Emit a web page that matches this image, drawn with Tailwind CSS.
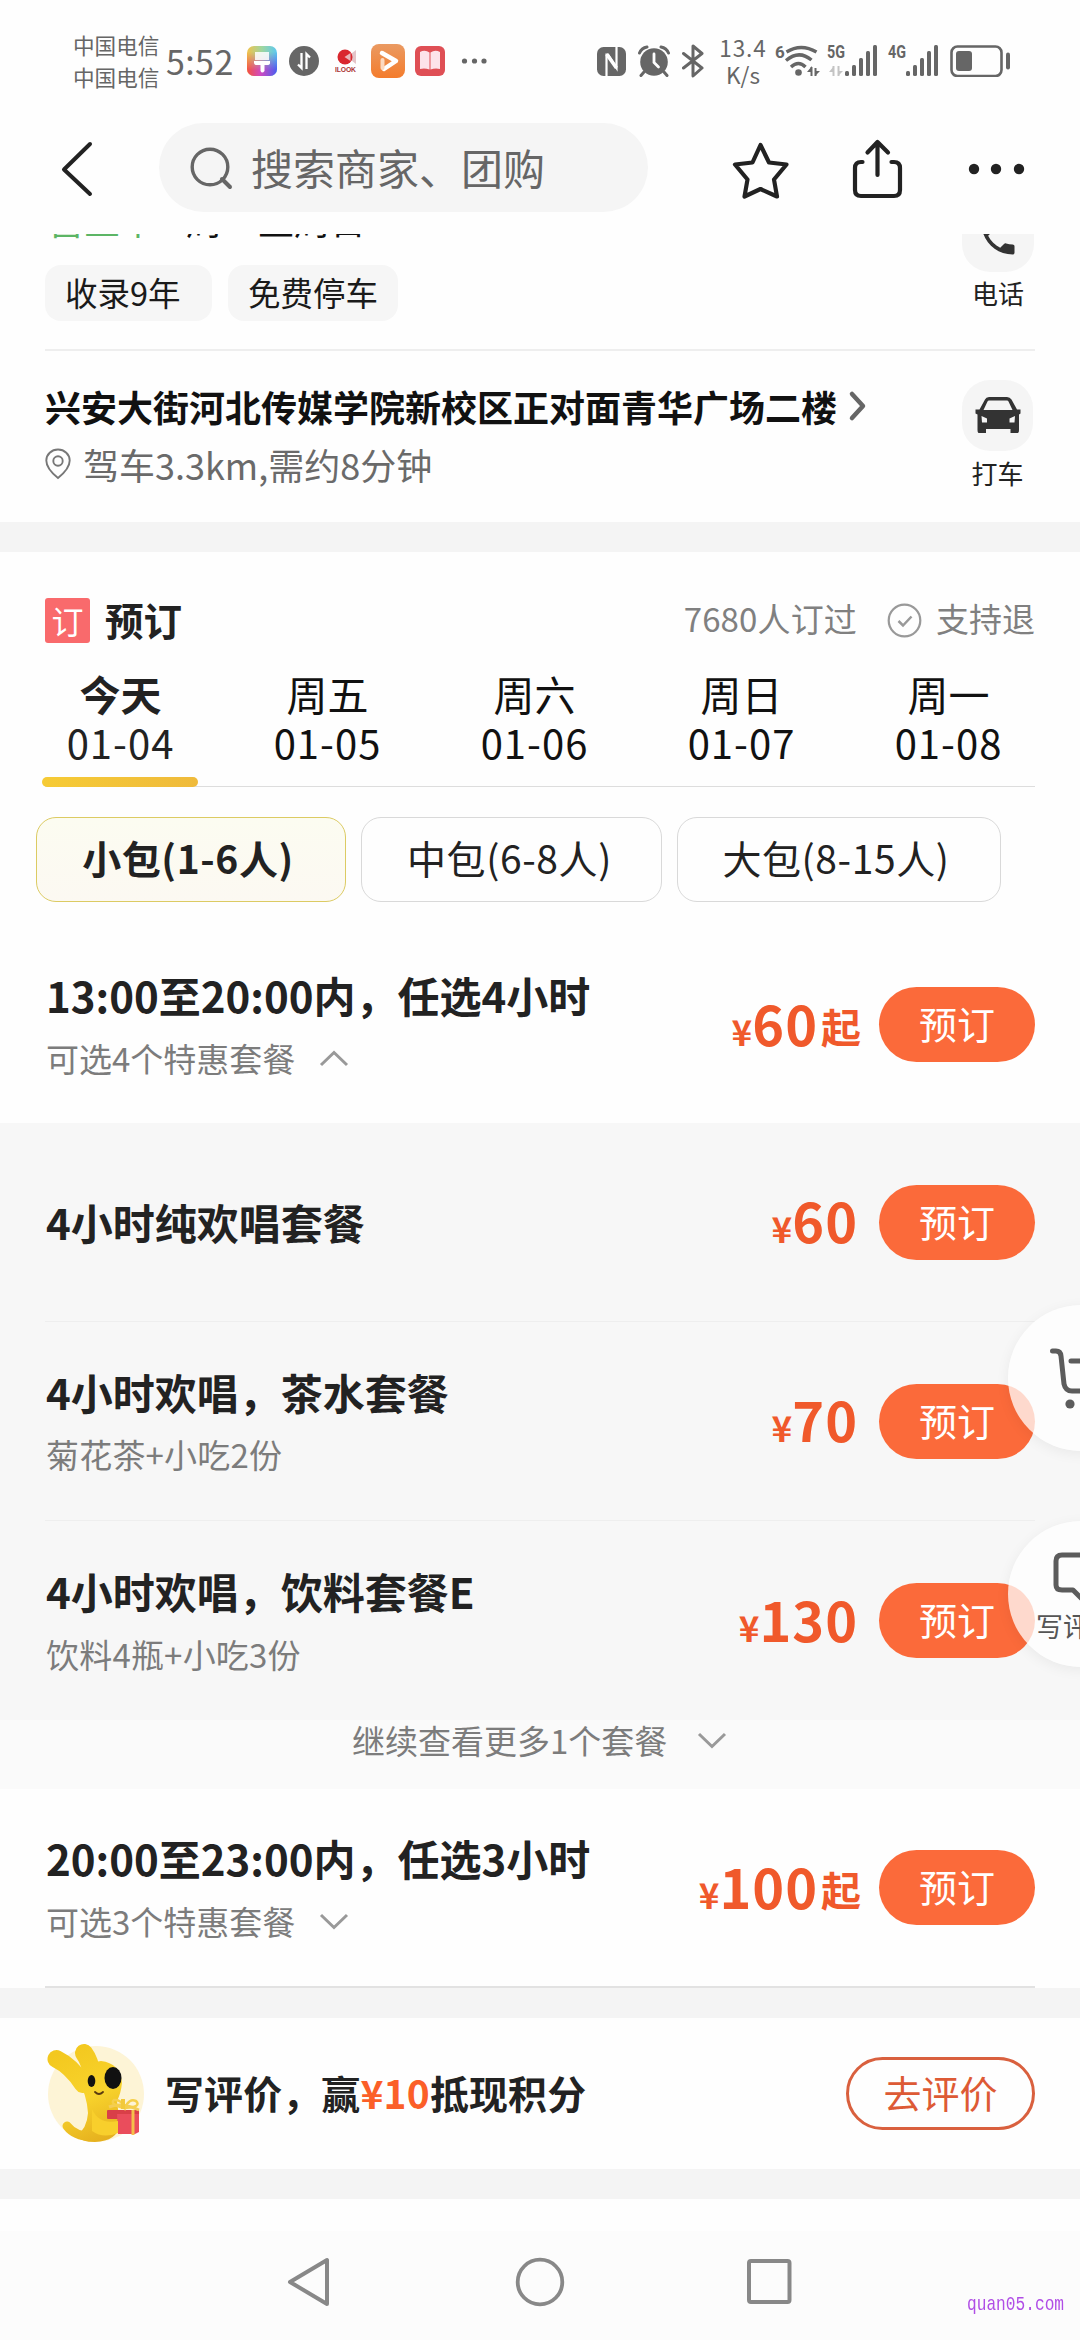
<!DOCTYPE html>
<html lang="zh-CN">
<head>
<meta charset="utf-8">
<title>预订</title>
<script src="https://cdn.jsdelivr.net/npm/@tailwindcss/browser@4"></script>
</head>
<body class="bg-[#fefefe] font-['Noto_Sans_CJK_SC',sans-serif] text-[#222]">
<div class="relative flex h-[2340px] w-[1080px] flex-col overflow-hidden whitespace-nowrap">

  <!-- status bar -->
  <div class="flex h-[122px] shrink-0 items-center text-[#666]">
    <div class="ml-[73px] w-[90px] text-[21.6px] leading-[32px]">
      <div>中国电信</div><div>中国电信</div>
    </div>
    <div class="ml-[3px] w-[70px] text-[34px] leading-[40px] tracking-[0.4px]">5:52</div>
    <svg class="ml-[11px]" width="30" height="30" viewBox="0 0 30 30">
      <defs>
        <linearGradient id="g1" x1="0" y1="0" x2="1" y2="0"><stop offset="0" stop-color="#f2c24a"/><stop offset=".5" stop-color="#9ed6a0"/><stop offset="1" stop-color="#5cc8f0"/></linearGradient>
        <linearGradient id="g2" x1="0" y1="0" x2="1" y2="0"><stop offset="0" stop-color="#f4513f"/><stop offset=".45" stop-color="#d04ac0"/><stop offset="1" stop-color="#4a5cf0"/></linearGradient>
        <linearGradient id="g3" x1="0" y1="0" x2="0" y2="1"><stop offset=".2" stop-color="#fff" stop-opacity="0"/><stop offset=".8" stop-color="#fff"/></linearGradient>
        <mask id="m1"><rect width="30" height="30" fill="url(#g3)"/></mask>
      </defs>
      <rect width="30" height="30" rx="7" fill="url(#g1)"/><rect width="30" height="30" rx="7" fill="url(#g2)" mask="url(#m1)"/>
      <path d="M8 6h14v8H8z" fill="#fff" opacity=".85"/><path d="M7 15h16v2q0 2-3 2h-2.500v6q-2.500 3-4 0v-6H10q-3 0-3-2z" fill="#fff"/>
    </svg>
    <svg class="ml-3" width="30" height="30" viewBox="0 0 30 30"><circle cx="15" cy="15" r="15" fill="#666"/><path d="M12.500 7v15l-3.500-3.500M17.500 23V8l3.500 3.500" fill="none" stroke="#fff" stroke-width="2.300"/></svg>
    <svg class="ml-4" width="24" height="30" viewBox="0 0 24 30"><path d="M12 11l9-7v14z" fill="#e4c4c8"/><circle cx="10" cy="11" r="7.500" fill="#d9272e"/><path d="M9.500 11l6-4v8z" fill="#e9b5b8"/><text x="0" y="26" font-family="Liberation Sans" font-weight="700" font-size="6.800" fill="#a33" textLength="21">ILOOK</text></svg>
    <svg class="ml-3" width="34" height="34" viewBox="0 0 34 34"><defs><linearGradient id="g4" x1="0" y1="0" x2="0" y2="1"><stop offset="0" stop-color="#ea9a62"/><stop offset="1" stop-color="#f47c2c"/></linearGradient></defs><rect width="34" height="34" rx="8" fill="url(#g4)"/><path d="M11 9l14 8-12 8" fill="none" stroke="#fff" stroke-width="4.500" stroke-linecap="round" stroke-linejoin="round"/><path d="M11.500 16v8" stroke="#fcd9c0" stroke-width="4" stroke-linecap="round"/></svg>
    <svg class="ml-2.5" width="30" height="30" viewBox="0 0 30 30"><rect width="30" height="30" rx="6" fill="#df4f55"/><path d="M5 6q5-2.500 9.500.5v17Q10 22 5 23zM25 6q-5-2.500-9.500.5v17Q20 22 25 23z" fill="#fde3ea"/></svg>
    <svg class="ml-4" width="26" height="8" viewBox="0 0 26 8"><g fill="#666"><circle cx="3.500" cy="4" r="2.600"/><circle cx="13.500" cy="4" r="2.600"/><circle cx="23" cy="4" r="2.600"/></g></svg>
    <svg class="ml-[110px]" width="29" height="29" viewBox="0 0 29 29"><rect width="29" height="29" rx="6.500" fill="#666"/><path d="M9.500 29V7.500H11L19.500 21V0" fill="none" stroke="#fefefe" stroke-width="2.200"/><path d="M9.500 7.500L11 9 19.500 21" fill="none" stroke="#fefefe" stroke-width="3.600"/></svg>
    <svg class="ml-3" width="32" height="32" viewBox="0 0 32 32"><circle cx="16" cy="17" r="13.800" fill="#666"/><path d="M1.500 8q2-5 7.500-6M30.500 8q-2-5-7.500-6M6 27l-3 3.500M26 27l3 3.500" stroke="#666" stroke-width="3" fill="none" stroke-linecap="round"/><path d="M16 9v8.500l4.500 4.500" fill="none" stroke="#fefefe" stroke-width="2.800" stroke-linecap="round"/></svg>
    <svg class="ml-3" width="22" height="34" viewBox="0 0 22 34"><path d="M1.500 9.500L20 24l-9 8V2l9 7.500L1.500 24" fill="none" stroke="#666" stroke-width="3" stroke-linejoin="round" stroke-linecap="round"/></svg>
    <div class="ml-[15px] w-[48px] text-center text-[22.5px] leading-[27px] tracking-[1px]"><div>13.4</div><div class="tracking-normal">K/s</div></div>
    <svg class="ml-[8px] overflow-visible" width="46" height="34" viewBox="0 0 46 34"><text x="0" y="14" font-family="Roboto" font-weight="700" font-size="17" fill="#666">6</text><g fill="none" stroke="#666" stroke-width="3.400"><path d="M11.500 8q14.500-9 30 0"/><path d="M11 16.500q13-11 25.500-.5"/><path d="M16 23q7.500-7 14.500 0"/></g><circle cx="23.500" cy="28.500" r="3.300" fill="#666"/><path d="M36.500 23v9M40.500 32v-8" stroke="#666" stroke-width="2"/><path d="M32 28l5-6v6zM45 27l-5 5v-5z" fill="#666"/></svg>
    <svg class="ml-[6px] overflow-visible" width="54" height="34" viewBox="0 0 54 34"><text x="0" y="14" font-family="Roboto" font-weight="700" font-size="18" fill="#666" textLength="18" lengthAdjust="spacingAndGlyphs">5G</text><path d="M6.500 22v10M11.500 22v10" stroke="#c4c4c4" stroke-width="2"/><path d="M2 28l5-6v6zM16 27l-5 5v-5z" fill="#c4c4c4"/><g fill="#666"><rect x="18" y="27" width="4" height="5" rx="1.500"/><rect x="25" y="21" width="4" height="11" rx="1.500"/><rect x="32" y="14" width="4" height="18" rx="1.500"/><rect x="39" y="7" width="4" height="25" rx="1.500"/><rect x="46" y="1" width="4" height="31" rx="1.500"/></g></svg>
    <svg class="ml-[7px] overflow-visible" width="54" height="34" viewBox="0 0 54 34"><text x="0" y="14" font-family="Roboto" font-weight="700" font-size="18" fill="#666" textLength="18" lengthAdjust="spacingAndGlyphs">4G</text><g fill="#666"><rect x="18" y="27" width="4" height="5" rx="1.500"/><rect x="25" y="21" width="4" height="11" rx="1.500"/><rect x="32" y="14" width="4" height="18" rx="1.500"/><rect x="39" y="7" width="4" height="25" rx="1.500"/><rect x="46" y="1" width="4" height="31" rx="1.500"/></g></svg>
    <svg class="ml-[8px]" width="62" height="32" viewBox="0 0 62 32"><rect x="1.500" y="1.500" width="50" height="29.500" rx="6" fill="none" stroke="#666" stroke-width="2.600"/><rect x="6" y="6" width="16" height="20" rx="3" fill="#666"/><rect x="56" y="7.500" width="4" height="17" rx="2" fill="#666"/></svg>
  </div>

  <!-- search header -->
  <div class="flex h-28 shrink-0 items-start">
    <svg class="ml-[60px] mt-[18px]" width="34" height="58" viewBox="0 0 34 58"><path d="M30 4L4 29.500 30 54" fill="none" stroke="#222" stroke-width="4" stroke-linecap="round" stroke-linejoin="round"/></svg>
    <div class="ml-[65px] mt-px flex h-[89px] w-[489px] items-center rounded-full bg-[#f5f5f5]">
      <svg class="ml-[31px]" width="44" height="44" viewBox="0 0 44 44"><circle cx="20" cy="21" r="17.800" fill="none" stroke="#666" stroke-width="3.400"/><path d="M32 33l8 8" stroke="#666" stroke-width="4" stroke-linecap="round"/></svg>
      <div class="-mt-[2px] ml-[17px] text-[42px] leading-[60px] text-[#666]">搜索商家、团购</div>
    </div>
    <svg class="ml-[83px] mt-[17px]" width="60" height="62" viewBox="0 0 60 62"><path d="M29.500 6L38 23.500 55.500 25.500 43 40.500 46 57.500 29.500 50 13.500 57.500 16.500 40.500 4 25.500 21.500 23.500Z" fill="none" stroke="#222" stroke-width="4.200" stroke-linejoin="round"/></svg>
    <svg class="ml-[61px] mt-[15px]" width="52" height="62" viewBox="0 0 52 62"><path d="M10.500 25H9Q3 25 3 31V53Q3 59 9 59H42Q48 59 48 53V31Q48 25 42 25H39.500M25.500 38V5M15.500 15.500L25.500 5 36 15.500" fill="none" stroke="#222" stroke-width="4.200" stroke-linecap="round" stroke-linejoin="round"/></svg>
    <svg class="ml-[62px] mt-[41px]" width="62" height="12" viewBox="0 0 62 12"><g fill="#222"><circle cx="8" cy="6" r="5.200"/><circle cx="30" cy="6" r="5.200"/><circle cx="53" cy="6" r="5.200"/></g></svg>
  </div>

  <!-- shop info, scrolled beneath the header -->
  <div class="flex h-[115px] shrink-0 justify-between overflow-hidden pl-[45px] pr-[46px]">
    <div>
      <div class="-mt-[33px] ml-[3px] flex h-[36px] gap-[30px] text-[36px] leading-[36px]"><span class="text-[#5cb565]">营业中</span><span class="text-[#111]">周一至周日</span></div>
      <div class="mt-[28px] flex gap-4 text-[32.5px] text-[#1a1a1a]">
        <div class="flex h-14 w-[167px] items-center rounded-2xl bg-[#f6f6f6] pb-0.5 pl-[20px]">收录9年</div>
        <div class="flex h-14 w-[170px] items-center rounded-2xl bg-[#f6f6f6] pb-0.5 pl-[20px]">免费停车</div>
      </div>
    </div>
    <div class="-mt-[34px] flex w-[72px] flex-col items-center">
      <div class="flex size-[72px] items-center justify-center rounded-[28px] bg-[#f5f5f5] pt-1">
        <svg width="44" height="44" viewBox="0 0 24 24" fill="#333"><path d="M6.620 10.790c1.440 2.830 3.760 5.140 6.590 6.590l2.200-2.200c.27-.27.67-.36 1.020-.24 1.120.37 2.330.57 3.570.57.550 0 1 .45 1 1V20c0 .55-.45 1-1 1-9.390 0-17-7.610-17-17 0-.55.45-1 1-1h3.500c.55 0 1 .45 1 1 0 1.250.2 2.450.57 3.570.11.35.03.74-.25 1.020l-2.200 2.200z"/></svg>
      </div>
      <div class="mt-[2px] text-[26px] leading-[37px]">电话</div>
    </div>
  </div>
  <div class="mx-[45px] h-[2px] shrink-0 bg-[#eee]"></div>

  <!-- address -->
  <div class="flex h-[171px] shrink-0 justify-between pl-[45px] pr-[47px]">
    <div class="pt-[30px]">
      <div class="flex items-center text-[36px] leading-[50px] font-bold text-[#111]">兴安大街河北传媒学院新校区正对面青华广场二楼
        <svg class="ml-[11px]" width="20" height="32" viewBox="0 0 20 32"><path d="M4 4l11 12L4 28" fill="none" stroke="#666" stroke-width="4.500" stroke-linecap="round" stroke-linejoin="round"/></svg>
      </div>
      <div class="mt-[8px] flex items-center text-[36px] leading-[50px] text-[#6a6a6a]">
        <svg class="mr-[12px]" width="26" height="32" viewBox="0 0 26 32"><path d="M13 30C8 26 1.300 19 1.300 12.500a11.700 11 0 0 1 23.400 0C24.700 19 18 26 13 30z" fill="none" stroke="#777" stroke-width="1.900"/><circle cx="13" cy="13" r="4.700" fill="none" stroke="#777" stroke-width="1.900"/></svg>驾车3.3km,需约8分钟
      </div>
    </div>
    <div class="mt-[29px] flex w-[71px] flex-col items-center">
      <div class="flex size-[71px] items-center justify-center rounded-[28px] bg-[#f5f5f5]">
        <svg width="46" height="40" viewBox="0 0 46 40"><path fill-rule="evenodd" d="M10 3.500Q11 1 14 1H32Q35 1 36.500 3.500L42 13.500H45.500V17.500L44 18.500V34Q44 37 43 37H35.500V33H11V37H3.500Q2.500 37 2.500 34V18.500L.5 17.500V13.500H4.500ZM8.500 14H37.500L33.500 5.500Q33 4.500 32 4.500H14Q13 4.500 12.500 5.500ZM6.500 20L7 26.500H12V22.500ZM40 20L34.500 22.500V26.500H39.500Z" fill="#333"/></svg>
      </div>
      <div class="mt-[3px] text-[26px] leading-[37px]">打车</div>
    </div>
  </div>
  <div class="h-[30px] shrink-0 bg-[#f4f4f4]"></div>

  <!-- booking heading -->
  <div class="flex h-[115px] shrink-0 items-center pt-[22px] pr-[45px] pl-[45px]">
    <div class="flex size-[45px] items-center justify-center rounded-[3px] bg-[#f96a6c] pb-0.5 text-[32px] leading-[44px] text-white">订</div>
    <div class="-mt-[4px] ml-[15px] text-[38.500px] leading-[56px] font-bold">预订</div>
    <div class="-mt-[3px] ml-auto text-[33px] tracking-[0.150px] text-[#808080]">7680人订过</div>
    <svg class="ml-[30px]" width="35" height="35" viewBox="0 0 35 35"><circle cx="17.500" cy="17.500" r="15.800" fill="none" stroke="#999" stroke-width="2.200"/><path d="M11.500 18l4.500 4.500 8.500-9" fill="none" stroke="#999" stroke-width="2.500"/></svg>
    <div class="-mt-[3px] ml-[14px] text-[33px] text-[#808080]">支持退</div>
  </div>

  <!-- dates -->
  <div class="ml-[17px] grid h-[120px] w-[1035px] shrink-0 grid-cols-5 text-center text-[41px] text-[#111]">
    <div class="relative flex flex-col pt-[1px]"><span class="leading-[50px] font-bold text-[#222]">今天</span><span class="text-[40px] leading-[49px] tracking-[1px] text-[#222]">01-04</span><span class="absolute bottom-0 left-[25px] z-10 h-[10px] w-[156px] rounded-full bg-linear-to-r from-[#f6cb35] to-[#efba3b]"></span></div>
    <div class="flex flex-col pt-[1px]"><span class="leading-[50px]">周五</span><span class="text-[40px] leading-[49px] tracking-[1px]">01-05</span></div>
    <div class="flex flex-col pt-[1px]"><span class="leading-[50px]">周六</span><span class="text-[40px] leading-[49px] tracking-[1px]">01-06</span></div>
    <div class="flex flex-col pt-[1px]"><span class="leading-[50px]">周日</span><span class="text-[40px] leading-[49px] tracking-[1px]">01-07</span></div>
    <div class="flex flex-col pt-[1px]"><span class="leading-[50px]">周一</span><span class="text-[40px] leading-[49px] tracking-[1px]">01-08</span></div>
  </div>
  <div class="mx-[45px] -mt-px h-px shrink-0 bg-[#ddd]"></div>

  <!-- room sizes -->
  <div class="mt-[30px] ml-9 flex h-[85px] shrink-0 gap-[15px] text-[39px] tracking-[0.6px]">
    <div class="flex w-[310px] items-center justify-center rounded-[20px] border border-[#dccb63] bg-linear-to-b from-[#fcfcf1] to-[#fcf9f2] pr-1.5 pb-1 font-bold">小包(1-6人)</div>
    <div class="flex w-[301px] items-center justify-center rounded-[20px] border border-[#d9d9d9] pr-1 pb-1">中包(6-8人)</div>
    <div class="flex w-[324px] items-center justify-center rounded-[20px] border border-[#d9d9d9] pr-1.5 pb-1">大包(8-15人)</div>
  </div>

  <!-- time slot 1 -->
  <div class="flex h-[221px] shrink-0 items-start pr-[45px] pl-[46px]">
    <div class="pt-[63px]">
      <div class="text-[42px] leading-[60px] font-bold">13:00至20:00内，任选4小时</div>
      <div class="mt-[13px] flex items-center text-[33px] leading-[40px] text-[#7c7c7c]">可选4个特惠套餐<svg class="ml-[23px]" width="32" height="20" viewBox="0 0 32 20"><path d="M3 17L16 4.500 29 17" fill="none" stroke="#999" stroke-width="3"/></svg></div>
    </div>
    <div class="mt-[85px] ml-auto flex h-[75px] items-center text-[#f0592b]">
      <div class="mt-[4px] mr-[18px] flex items-baseline leading-[60px] font-bold"><span class="text-[35px]">¥</span><span class="text-[54px] tracking-[1px]">60</span><span class="relative -top-[3px] ml-[3px] text-[40px]">起</span></div>
      <div class="flex h-[75px] w-[156px] items-center justify-center rounded-full bg-[#fb6a3a] pb-1 text-[38px] text-white">预订</div>
    </div>
  </div>

  <!-- packages -->
  <div class="flex h-[597px] shrink-0 flex-col bg-[#f7f7f7] px-[45px]">
    <div class="flex h-[199px] items-center justify-between border-b border-[#eee]">
      <div class="pl-px text-[42px] leading-[60px] font-bold">4小时纯欢唱套餐</div>
      <div class="flex items-center text-[#f0592b]">
        <div class="mt-[4px] mr-[21px] flex items-baseline leading-[60px] font-bold"><span class="text-[35px]">¥</span><span class="text-[54px] tracking-[1px]">60</span></div>
        <div class="flex h-[75px] w-[156px] items-center justify-center rounded-full bg-[#fb6a3a] pb-1 text-[38px] text-white">预订</div>
      </div>
    </div>
    <div class="flex h-[199px] items-center justify-between border-b border-[#eee]">
      <div class="pb-[6px] pl-px">
        <div class="text-[42px] leading-[60px] font-bold">4小时欢唱，茶水套餐</div>
        <div class="mt-[12px] text-[33px] leading-[40px] tracking-[0.200px] text-[#7c7c7c]">菊花茶+小吃2份</div>
      </div>
      <div class="flex items-center text-[#f0592b]">
        <div class="mt-[4px] mr-[21px] flex items-baseline leading-[60px] font-bold"><span class="text-[35px]">¥</span><span class="text-[54px] tracking-[1px]">70</span></div>
        <div class="flex h-[75px] w-[156px] items-center justify-center rounded-full bg-[#fb6a3a] pb-1 text-[38px] text-white">预订</div>
      </div>
    </div>
    <div class="flex h-[199px] items-center justify-between">
      <div class="pb-[7px] pl-px">
        <div class="text-[42px] leading-[60px] font-bold">4小时欢唱，饮料套餐E</div>
        <div class="mt-[13px] text-[33px] leading-[40px] tracking-[0.200px] text-[#7c7c7c]">饮料4瓶+小吃3份</div>
      </div>
      <div class="flex items-center text-[#f0592b]">
        <div class="mt-[4px] mr-[21px] flex items-baseline leading-[60px] font-bold"><span class="text-[35px]">¥</span><span class="text-[54px] tracking-[1px]">130</span></div>
        <div class="flex h-[75px] w-[156px] items-center justify-center rounded-full bg-[#fb6a3a] pb-1 text-[38px] text-white">预订</div>
      </div>
    </div>
  </div>
  <div class="flex h-[69px] shrink-0 items-center bg-[#fafafa] pb-[29px] pl-[352px] text-[33px] leading-[40px] text-[#7c7c7c]">继续查看更多1个套餐<svg class="ml-[29px]" width="32" height="20" viewBox="0 0 32 20"><path d="M3 4L16 16.500 29 4" fill="none" stroke="#999" stroke-width="3"/></svg></div>

  <!-- time slot 2 -->
  <div class="mx-[45px] flex h-[199px] shrink-0 items-center justify-between border-b-2 border-[#e2e2e2]">
    <div class="pb-[7px] pl-px">
      <div class="text-[42px] leading-[60px] font-bold">20:00至23:00内，任选3小时</div>
      <div class="mt-[13px] flex items-center text-[33px] leading-[40px] text-[#7c7c7c]">可选3个特惠套餐<svg class="ml-[23px]" width="32" height="20" viewBox="0 0 32 20"><path d="M3 4L16 16.500 29 4" fill="none" stroke="#999" stroke-width="3"/></svg></div>
    </div>
    <div class="flex items-center text-[#f0592b]">
      <div class="mt-[4px] mr-[18px] flex items-baseline leading-[60px] font-bold"><span class="text-[35px]">¥</span><span class="text-[54px] tracking-[1px]">100</span><span class="relative -top-[3px] ml-[3px] text-[40px]">起</span></div>
      <div class="flex h-[75px] w-[156px] items-center justify-center rounded-full bg-[#fb6a3a] pb-1 text-[38px] text-white">预订</div>
    </div>
  </div>
  <div class="h-[30px] shrink-0 bg-[#f4f4f4]"></div>

  <!-- review prompt -->
  <div class="flex h-[151px] shrink-0 items-center pr-[45px] pl-[45px]">
    <svg width="101" height="106" viewBox="0 0 101 106">
      <defs>
        <linearGradient id="b" gradientUnits="userSpaceOnUse" x1="20" y1="10" x2="60" y2="104"><stop offset="0" stop-color="#f3c81f"/><stop offset=".5" stop-color="#f8d32c"/><stop offset="1" stop-color="#e3ac1d"/></linearGradient>
      </defs>
      <circle cx="51" cy="53" r="48" fill="#fdf4d6"/>
      <path d="M11.500 18Q26 25 38 43" fill="none" stroke="url(#b)" stroke-width="18" stroke-linecap="round"/>
      <path d="M39 12Q45 20 47 34" fill="none" stroke="url(#b)" stroke-width="18" stroke-linecap="round"/>
      <path d="M22 85Q31 97 52 95" fill="none" stroke="url(#b)" stroke-width="9" stroke-linecap="round"/>
      <path d="M32 36Q38 22 56 20Q75 22 77 42Q76 52 72 60L75 84Q72 100 50 101Q36 101 31 95Q42 88 43 72Q42 54 32 36Z" fill="url(#b)"/>
      <ellipse cx="68" cy="37" rx="8.500" ry="11" fill="#111"/><ellipse cx="46.500" cy="40" rx="3.800" ry="6" fill="#111"/>
      <path d="M50 51q4 4 8 0" fill="none" stroke="#5a3a10" stroke-width="1.800" stroke-linecap="round"/>
      <rect x="62" y="69" width="32" height="9" rx="1" fill="#d93f48"/><path d="M72 73H94V91L90 93H73z" fill="#ea4d5c"/>
      <path d="M88 69v25" stroke="#f5c04a" stroke-width="3"/><path d="M64 66q12-5 30 3" stroke="#f3cd58" stroke-width="3" fill="none"/><path d="M79 67Q64 63 69 59Q76 58 80 67Q84 57 91 60Q97 66 80 67" fill="none" stroke="#f5cf4a" stroke-width="2.500"/><path d="M78 58v10" stroke="#f2c93a" stroke-width="4"/>
      <path d="M47 68Q54 84 73 80V92Q58 98 47 90Z" fill="#f8cf2c"/>
    </svg>
    <div class="-mt-[2px] ml-[19px] text-[38.900px] font-bold tracking-[0.200px]">写评价，赢<span class="text-[#fb5f28]">¥10</span>抵现积分</div>
    <div class="ml-auto flex h-[73px] w-[189px] items-center justify-center rounded-full border-[3px] border-[#d9603e] pb-1 text-[38px] text-[#dd5a35]">去评价</div>
  </div>
  <div class="h-[30px] shrink-0 bg-[#f4f4f4]"></div>
  <div class="h-[32px] shrink-0"></div>

  <!-- system navigation -->
  <div class="flex h-[110px] shrink-0 items-start bg-[#fcfcfc] pt-[25px]">
    <svg class="ml-[286px] shrink-0" width="46" height="52" viewBox="0 0 46 52"><path d="M41 4V48L4 26Z" fill="none" stroke="#888" stroke-width="4" stroke-linejoin="round"/></svg>
    <svg class="ml-[182px] shrink-0" width="52" height="52" viewBox="0 0 52 52"><circle cx="26" cy="26" r="22.300" fill="none" stroke="#888" stroke-width="3.800"/></svg>
    <svg class="ml-[179px] shrink-0" width="48" height="52" viewBox="0 0 48 52"><rect x="4" y="5" width="40.500" height="41" rx="2" fill="none" stroke="#888" stroke-width="4"/></svg>
    <div class="mt-[37px] ml-[174px] w-[100px] shrink-0 origin-left scale-x-[0.770] font-['Liberation_Mono',monospace] text-[21px] leading-6 text-[#b04ee6]">quan05.com</div>
  </div>

  <!-- floating buttons -->
  <div class="absolute top-[1305px] left-[1008px] size-[146px] rounded-full bg-white/75 shadow-[0_3px_14px_rgba(0,0,0,0.06)]">
    <svg class="absolute top-[40px] left-[40px]" width="60" height="70" viewBox="0 0 60 70"><path d="M4.500 6H8Q12.500 6 13 11L16 39Q17.500 46 24 46H50M23 16H54L50 34" fill="none" stroke="#5c5c5c" stroke-width="5" stroke-linecap="round"/><circle cx="22" cy="59" r="4.600" fill="#5c5c5c"/><circle cx="46" cy="59" r="4.600" fill="#5c5c5c"/></svg>
  </div>
  <div class="absolute top-[1521px] left-[1008px] size-[146px] rounded-full bg-white/75 shadow-[0_3px_14px_rgba(0,0,0,0.06)]">
    <svg class="absolute top-[28px] left-[44px]" width="60" height="56" viewBox="0 0 60 56"><path d="M10 6H50Q56 6 56 12V36Q56 41 50 41H36L29 49 21 41H10Q4 41 4 36V12Q4 6 10 6Z" fill="none" stroke="#5c5c5c" stroke-width="5" stroke-linejoin="round"/></svg>
    <div class="absolute top-[86px] left-[28px] text-[27px] leading-[38px] text-[#555]">写评价</div>
  </div>
</div>
</body>
</html>
